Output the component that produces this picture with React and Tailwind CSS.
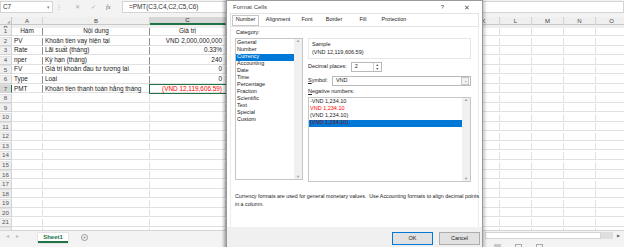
import React from "react"

/* ---------------- Data ---------------- */
const cols = ["A", "B", "C", "D", "E", "F", "G", "H", "I", "J", "K", "L", "M", "N", "O", "P"]

const data = {
  1: ["Hàm", "Nội dung", "Giá trị"],
  2: ["PV", "Khoản tiền vay hiện tại", "VND 2,000,000,000"],
  3: ["Rate", "Lãi suất (tháng)", "0.33%"],
  4: ["nper", "Kỳ hạn (tháng)", "240"],
  5: ["FV", "Giá trị khoản đầu tư tương lai", "0"],
  6: ["Type", "Loại", "0"],
  7: ["PMT", "Khoản tiền thanh toán hằng tháng", "(VND 12,119,606.59)"],
}

const categories = [
  "General", "Number", "Currency", "Accounting", "Date", "Time",
  "Percentage", "Fraction", "Scientific", "Text", "Special", "Custom",
]

const gridCols = "grid grid-cols-[12px_31px_107px_76px_50px_repeat(11,32px)]"

/* ---------------- Spreadsheet ---------------- */
function FormulaBar() {
  return (
    <div className="h-[17px] bg-[#f3f3f3] flex items-start pt-[1px] text-[6.4px] text-[#333]">
      <div className="w-[53px] h-[12px] bg-white border border-[#d4d4d4] flex items-center justify-between px-[2px]">
        <span>C7</span>
        <span className="text-[5px] text-[#888]">▾</span>
      </div>
      <div className="w-[69px] h-[12px] flex items-center text-[#aaa]">
        <span className="ml-[3px] text-[6px]">⋮</span>
        <span className="ml-[13px]">✕</span>
        <span className="ml-[11px]">✓</span>
        <span className="ml-[10px] italic font-['Liberation_Serif'] text-[#666]">fx</span>
      </div>
      <div className="flex-1 h-[12px] bg-white border border-[#d4d4d4] flex items-center pl-[6px]">
        =PMT(C3,C4,C2,C5,C6)
      </div>
    </div>
  )
}

function HeaderRow() {
  return (
    <div className={gridCols + " h-[11px] bg-[#efefef] text-[6px] text-[#444]"}>
      <div className="border-r border-b border-[#c8c8c8] flex items-end justify-end pr-[1px]">
        <span className="text-[4px] leading-[4px] text-[#aaa]">◢</span>
      </div>
      {cols.map((c) => (
        <div
          key={c}
          className={
            "flex items-center justify-center border-r border-[#d2d2d2] " +
            (c === "C" ? "bg-[#d6d6d6] border-b-2 border-b-[#217346] text-[#222]" : "border-b border-b-[#c8c8c8]")
          }
        >
          {c}
        </div>
      ))}
    </div>
  )
}

function Row({ n }) {
  const d = data[n]
  const selected = n === 7
  return (
    <div className={gridCols + " h-[9.55px] text-[6.4px] text-[#222]"}>
      <div
        className={
          "flex items-center justify-center border-r border-b border-[#d2d2d2] text-[6.2px] text-[#555] " +
          (selected ? "bg-[#d6d6d6] border-r-[#217346] text-[#222]" : "bg-[#efefef]")
        }
      >
        {n}
      </div>
      {cols.map((c, i) => {
        const text = d && i < 3 ? d[i] : ""
        const framed = d && i < 2
        let cls = "flex items-center overflow-visible whitespace-nowrap border-b border-[#e1e1e1] "
        cls += framed ? "border-r border-r-[#8f8f8f] " : "border-r border-r-[#e1e1e1] "
        if (n === 1) cls += "justify-center "
        else if (i === 2) cls += "justify-end pr-[3px] "
        else cls += "pl-[2px] "
        if (selected && i === 2) cls += "text-[#ff0000] outline outline-[1.5px] outline-[#217346] "
        return (
          <div key={c} className={cls}>
            {text}
          </div>
        )
      })}
    </div>
  )
}

function SheetTabs() {
  return (
    <div className="h-[18px] flex border-t border-[#d4d4d4] bg-[#f3f3f3]">
      <div className="w-[226px] flex items-start pt-[2px] text-[6px]">
        <span className="ml-[6px] text-[#bbb]">◂</span>
        <span className="ml-[7px] text-[#bbb]">▸</span>
        <div className="ml-[19px] w-[30px] h-[10px] bg-white border-b-2 border-[#217346] flex items-center justify-center font-bold text-[#217346] shadow-[0_0_1px_#999]">
          Sheet1
        </div>
        <span className="ml-[13px] w-[7px] h-[7px] mt-[1px] rounded-full border border-[#999] text-[#777] text-[5px] flex items-center justify-center leading-none">
          +
        </span>
      </div>
      <div className="flex-1" />
      <div className="w-[141px] flex flex-col">
        <div className="h-[9px] flex items-center">
          <div className="w-[116px] h-[7px] ml-[2px] bg-white border border-[#d4d4d4]" />
          <div className="w-[12px] h-[7px] bg-[#dedede]" />
          <span className="ml-[4px] text-[4px] text-[#666]">▶</span>
        </div>
        <div className="flex-1 flex items-end gap-[14px] pl-[11px]">
          <div className="w-[7px] h-[4px] bg-[#c8c8c8]" />
          <div className="w-[7px] h-[4px] border border-[#aaa]" />
          <div className="w-[7px] h-[4px] border border-[#aaa]" />
        </div>
      </div>
    </div>
  )
}

/* ---------------- Dialog ---------------- */
function Dialog() {
  const tabs = [
    ["Number", "w-[27px]"],
    ["Alignment", "w-[34px] ml-[2px]"],
    ["Font", "w-[24px]"],
    ["Border", "w-[30px]"],
    ["Fill", "w-[28px]"],
    ["Protection", "w-[34px]"],
  ]
  return (
    <div className="absolute left-[226px] top-0 w-[257px] h-[260px] bg-white border border-[#9a9a9a] shadow-[-2px_0_3px_rgba(0,0,0,0.35),2px_0_3px_rgba(0,0,0,0.2)] flex flex-col text-[5.5px] text-[#222] font-['Liberation_Sans']">
      {/* Title */}
      <div className="h-[12px] flex items-center px-[6px] text-[#444]">
        <span className="text-[6px]">Format Cells</span>
        <span className="ml-auto mr-[20px] text-[6px]">?</span>
        <span className="mr-[6px] text-[7px] text-[#555]">✕</span>
      </div>

      {/* Tabs */}
      <div className="mx-[3px] h-[14px] flex items-center pl-[1px] border border-[#e3e3e3]">
        {tabs.map(([t, w], i) => (
          <span
            key={t}
            className={
              w +
              " h-[11px] flex items-center justify-center whitespace-nowrap " +
              (i === 0 ? "border border-[#c6c6c6] bg-white" : "")
            }
          >
            {t}
          </span>
        ))}
      </div>

      {/* Body */}
      <div className="flex-1 mx-[3px] border-l border-r border-[#ececec] flex flex-col">
        <div className="flex px-[4px]">
          {/* Category */}
          <div className="w-[68px] flex flex-col">
            <span className="h-[11px] flex items-center pl-[1px] pt-[1px]">Category:</span>
            <div className="h-[142px] border border-[#c6c6c6] flex">
              <div className="flex-1 pt-[0.5px]">
                {categories.map((c) => (
                  <div
                    key={c}
                    className={"h-[7px] flex items-center pl-[1px] " + (c === "Currency" ? "bg-[#0078d7] text-white" : "")}
                  >
                    {c}
                  </div>
                ))}
              </div>
              <div className="w-[8px] bg-[#f0f0f0] flex flex-col items-center justify-between text-[4px] text-[#999]">
                <span>▲</span>
                <span>▼</span>
              </div>
            </div>
          </div>

          {/* Options */}
          <div className="flex-1 ml-[5px] mr-[3px] flex flex-col pt-[11px]">
            <div className="h-[21px] border border-[#e6e6e6] flex flex-col justify-center pl-[3px] gap-[3px]">
              <span>Sample</span>
              <span>(VND 12,119,606.59)</span>
            </div>
            <div className="h-[16px] flex items-center">
              <span>Decimal places:</span>
              <div className="ml-[4px] w-[31px] h-[10px] border border-[#b9b9b9] flex items-center">
                <span className="pl-[3px] flex-1">2</span>
                <div className="w-[8px] h-full border-l border-[#d0d0d0] flex flex-col items-center justify-center text-[3.5px] leading-[4px] text-[#555]">
                  <span>▲</span>
                  <span>▼</span>
                </div>
              </div>
            </div>
            <div className="h-[11px] flex items-center">
              <span>
                <span className="underline">S</span>ymbol:
              </span>
              <div className="ml-[4px] flex-1 h-[10px] border border-[#b9b9b9] flex items-center">
                <span className="pl-[3px] flex-1">VND</span>
                <div className="w-[8px] h-[8px] mr-[1px] border border-[#c8c8c8] bg-[#f2f2f2] flex items-center justify-center text-[4px] text-[#666]">
                  ⌄
                </div>
              </div>
            </div>
            <span className="h-[11px] flex items-center">
              <span className="underline">N</span>egative numbers:
            </span>
            <div className="h-[85px] border border-[#c6c6c6] flex">
              <div className="flex-1 pt-[0.5px]">
                <div className="h-[7px] flex items-center pl-[1px]">-VND 1,234.10</div>
                <div className="h-[7px] flex items-center pl-[1px] text-[#ff0000]">VND 1,234.10</div>
                <div className="h-[7px] flex items-center pl-[1px]">(VND 1,234.10)</div>
                <div className="h-[7px] flex items-center pl-[1px] bg-[#0078d7] text-[#7a1010]">(VND 1,234.10)</div>
              </div>
              <div className="w-[8px] bg-[#f0f0f0] flex flex-col items-center justify-between text-[4px] text-[#999]">
                <span>▲</span>
                <span>▼</span>
              </div>
            </div>
          </div>
        </div>

        <p className="mt-[10px] px-[4px] leading-[8px] text-[5.3px] whitespace-nowrap">
          Currency formats are used for general monetary values.&nbsp; Use Accounting formats to align decimal points
          <br />
          in a column.
        </p>
      </div>

      {/* Footer */}
      <div className="h-[32px] bg-[#f0f0f0] flex items-start justify-end pt-[5px] pr-[2px] gap-[6px]">
        <button className="w-[41px] h-[13px] bg-[#e1e1e1] border border-[#0078d7] text-[5.5px]">OK</button>
        <button className="w-[41px] h-[13px] bg-[#e1e1e1] border border-[#adadad] text-[5.5px]">Cancel</button>
      </div>
    </div>
  )
}

/* ---------------- App ---------------- */
export default function App() {
  const rows = Array.from({ length: 22 }, (_, i) => i + 1)
  return (
    <div className="relative w-[624px] h-[247px] overflow-hidden bg-white font-['Liberation_Sans'] leading-none">
      <FormulaBar />
      <div className="h-[213px] overflow-hidden">
        <HeaderRow />
        {rows.map((n) => (
          <Row key={n} n={n} />
        ))}
      </div>
      <SheetTabs />
      <Dialog />
    </div>
  )
}
